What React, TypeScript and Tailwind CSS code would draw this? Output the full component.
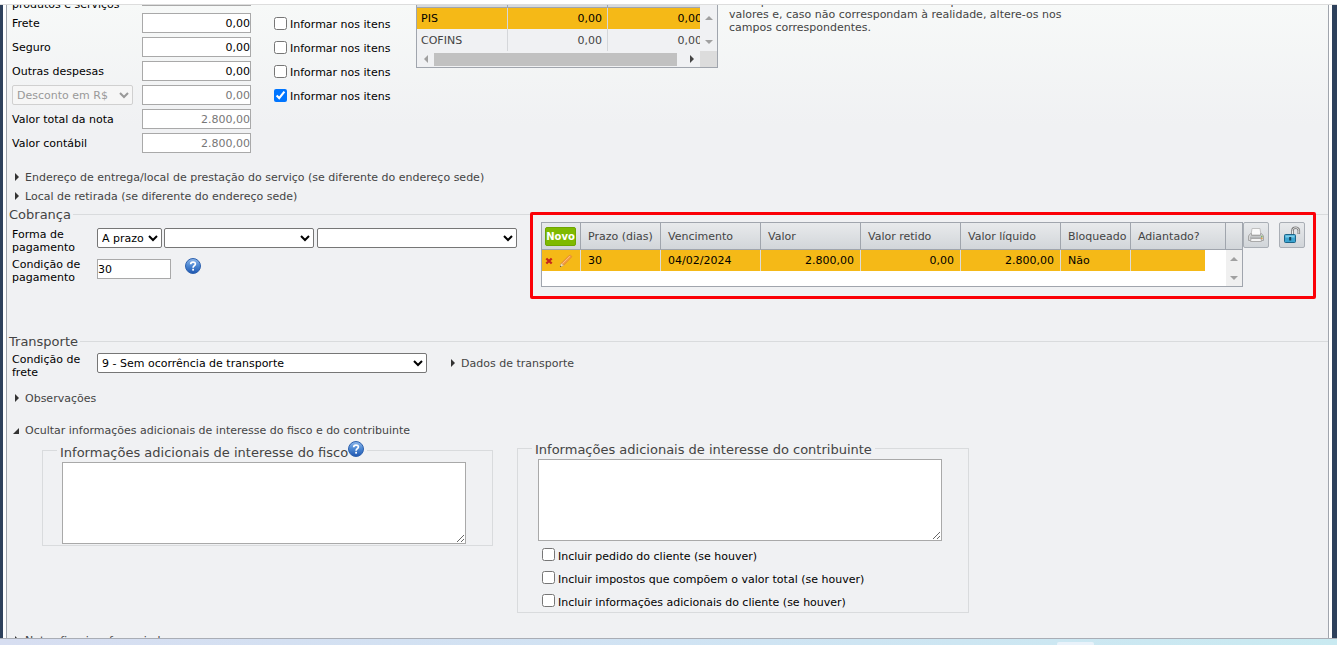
import React, { useState } from 'react';

const inputCls = 'h-5 border border-[#a9a9a9] bg-white outline-none';
const selectCls = 'h-5 rounded-xs border border-[#767676] bg-white text-black';
const legendCls = 'px-[2px] pt-[2px] text-[13px] leading-[14px] text-[#444]';
const iconBtnCls = 'flex size-[26px] items-center justify-center rounded-xs border border-[#a9aeb5] bg-linear-to-b from-[#e8eaec] to-[#d1d5d9]';

const totals = [
    { id: 'frete', label: 'Frete', value: '0,00', check: true },
    { id: 'seguro', label: 'Seguro', value: '0,00', check: true },
    { id: 'outras', label: 'Outras despesas', value: '0,00', check: true },
    { id: 'desconto', label: 'Desconto em R$', value: '0,00', check: true, disabled: true, select: true },
    { id: 'total', label: 'Valor total da nota', value: '2.800,00', disabled: true },
    { id: 'contabil', label: 'Valor contábil', value: '2.800,00', disabled: true },
];

const taxes = [
    { name: 'PIS', base: '0,00', value: '0,00' },
    { name: 'COFINS', base: '0,00', value: '0,00' },
];

const columns = [
    { label: 'Prazo (dias)', value: '30', width: 'w-[80px]' },
    { label: 'Vencimento', value: '04/02/2024', width: 'w-[100px]' },
    { label: 'Valor', value: '2.800,00', width: 'w-[100px]', right: true },
    { label: 'Valor retido', value: '0,00', width: 'w-[100px]', right: true },
    { label: 'Valor líquido', value: '2.800,00', width: 'w-[100px]', right: true },
    { label: 'Bloqueado', value: 'Não', width: 'w-[70px]' },
];

const extras = [
    'Incluir pedido do cliente (se houver)',
    'Incluir impostos que compõem o valor total (se houver)',
    'Incluir informações adicionais do cliente (se houver)',
];

const Arrow = ({ dir, color = '#a0a0a0' }: { dir: 'up' | 'down' | 'left' | 'right'; color?: string }) => {
    const d = { up: 'M0 6L4 2L8 6Z', down: 'M0 2L4 6L8 2Z', left: 'M6 0L2 4L6 8Z', right: 'M2 0L6 4L2 8Z' }[dir];
    return <svg width="8" height="8" viewBox="0 0 8 8" className="shrink-0"><path d={d} fill={color} /></svg>;
};

const HelpIcon = () => (
    <svg width="16" height="16" viewBox="0 0 16 16">
        <defs>
            <linearGradient id="help" x1="0" y1="0" x2="0" y2="1">
                <stop offset="0" stopColor="#8fb8ea" />
                <stop offset="0.5" stopColor="#4a86d2" />
                <stop offset="1" stopColor="#1f56b0" />
            </linearGradient>
        </defs>
        <circle cx="8" cy="8" r="7.5" fill="url(#help)" stroke="#2f62ae" strokeWidth="1" />
        <path d="M5.7 6.2C5.7 3.4 10.4 3.4 10.4 6C10.4 7.7 8.1 7.6 8.1 9.7" fill="none" stroke="#fff" strokeWidth="1.7" />
        <rect x="7.2" y="10.8" width="1.8" height="1.8" fill="#fff" />
    </svg>
);

const PrinterIcon = () => (
    <svg width="16" height="16" viewBox="0 0 16 16">
        <path d="M4 1.5H12L13 8H3Z" fill="#fafafa" stroke="#c0c0c0" />
        <path d="M2.5 6.5H3.5V8.5H12.5V6.5H13.5L15.5 9V13.5H0.5V9Z" fill="#d6d7d8" stroke="#a6a6a6" />
        <path d="M2 9.5H14V12H2Z" fill="#b4b6b8" />
        <path d="M3 11.5H13L13.5 14.5H2.5Z" fill="#f4f4f4" stroke="#aaa" />
        <rect x="13" y="8.7" width="1.6" height="1.6" fill="#7fb36b" />
        <rect x="13" y="10.7" width="1.6" height="1.4" fill="#e0a04a" />
    </svg>
);

const UnlockIcon = () => (
    <svg width="18" height="18" viewBox="0 0 18 18">
        <path d="M9.5 9V4.5C9.5 0.8 15.8 0.8 15.8 4.5V8" fill="none" stroke="#777" strokeWidth="2.6" />
        <path d="M9.5 9V4.5C9.5 0.8 15.8 0.8 15.8 4.5V7.6" fill="none" stroke="#ececec" strokeWidth="1" />
        <rect x="1.5" y="8.5" width="11" height="8" rx="1" fill="#3ba4d0" stroke="#1c6488" />
        <rect x="2.5" y="9.5" width="9" height="2" fill="#80cdea" />
        <rect x="6.2" y="11" width="2" height="3.5" fill="#123f58" />
    </svg>
);

const PencilIcon = () => (
    <svg width="14" height="14" viewBox="0 0 14 14">
        <path d="M2 9.5L10 1.5Q12 0.5 12.8 2.8L4.8 11.2Z" fill="#f39a3c" stroke="#d98435" strokeWidth="0.6" />
        <path d="M3.3 9.8L11.2 2" stroke="#ffc283" strokeWidth="1" />
        <path d="M2 9.5L4.8 11.2L1 13Z" fill="#f6e3c0" stroke="#c9a468" strokeWidth="0.5" />
        <path d="M1 13L1.4 11.8L2.4 12.4Z" fill="#333" />
    </svg>
);

const Toggle = ({ children, open = false }: { children: React.ReactNode; open?: boolean }) => (
    <a href="#" className="flex h-[19px] w-fit items-center gap-[5px] text-[#444]">
        {open ? (
            <svg width="8" height="8" viewBox="0 0 8 8"><path d="M7 1V7H1Z" fill="#333" /></svg>
        ) : (
            <svg width="8" height="10" viewBox="0 0 8 10"><path d="M3 0L7 4L3 8Z" fill="#333" /></svg>
        )}
        <span>{children}</span>
    </a>
);

const Check = ({ id, label, checked = false, onChange }: { id: string; label: string; checked?: boolean; onChange: () => void }) => (
    <div className="flex items-center gap-[3px]">
        <input id={id} type="checkbox" checked={checked} onChange={onChange} className="size-[13px]" />
        <label htmlFor={id} className="pt-[3px]">{label}</label>
    </div>
);

export default function App() {
    const [checks, setChecks] = useState<Record<string, boolean>>({ desconto: true });
    const toggle = (id: string) => setChecks({ ...checks, [id]: !checks[id] });

    return (
        <div className="flex h-screen flex-col bg-white font-['Verdana','DejaVu_Sans',sans-serif] text-[11px] leading-[13px] text-black">
            <div className="h-[5px] shrink-0 border-b border-[#ddd]" />
            <div className="flex min-h-0 grow border-x-[3px] border-l-[#2e415c] border-r-[#2e415c] border-r-[5px] px-[3px]">
                <main className="min-w-0 grow overflow-hidden border-x border-[#a0a5ad] bg-[#f0f1f3] bg-linear-to-b from-[#f7f9f8] to-[#f0f1f3] to-[120px]">
                    <div className="-mt-5 flex h-[170px] items-start">
                        <div className="ml-[5px] w-[404px] shrink-0">
                            <div className="flex h-[26px] items-end">
                                <label htmlFor="produtos" className="w-[130px]">produtos e serviços</label>
                                <input id="produtos" className={`${inputCls} mb-[5px] w-[109px] text-right`} />
                            </div>
                            {totals.map(r => (
                                <div key={r.id} className="flex h-6 items-center">
                                    <div className="w-[130px]">
                                        {r.select ? (
                                            <select disabled aria-label="Tipo de desconto" className="h-5 w-[121px] rounded-xs border border-[#d0d0d0] bg-[#f6f6f6] text-[#999]">
                                                <option>{r.label}</option>
                                            </select>
                                        ) : (
                                            <label htmlFor={r.id} className="block pt-px">{r.label}</label>
                                        )}
                                    </div>
                                    <input id={r.id} aria-label={r.label} defaultValue={r.value} disabled={r.disabled} className={`${inputCls} w-[109px] text-right disabled:text-[#777]`} />
                                    {r.check && (
                                        <div className="ml-[23px]">
                                            <Check id={`itens-${r.id}`} label="Informar nos itens" checked={!!checks[r.id]} onChange={() => toggle(r.id)} />
                                        </div>
                                    )}
                                </div>
                            ))}
                        </div>

                        <div className="w-[302px] shrink-0 border border-[#a0a5ad] bg-[#f0f1f3]">
                            <div className="flex">
                                <div className="w-[283px] overflow-hidden">
                                    <table className="w-[290px] table-fixed border-separate border-spacing-0">
                                        <thead>
                                            <tr className="h-[22px] bg-[#d7dade]">
                                                <th aria-label="Imposto" className="w-[91px] border-r border-b border-[#a0a5ad]" />
                                                <th aria-label="Base" className="w-[100px] border-r border-b border-[#a0a5ad]" />
                                                <th aria-label="Valor do imposto" className="border-b border-[#a0a5ad]" />
                                            </tr>
                                        </thead>
                                        <tbody>
                                            {taxes.map((t, i) => (
                                                <tr key={t.name} className={i === 0 ? 'h-[21px] bg-[#f5b917]' : 'h-[22px] text-[#444]'}>
                                                    <td className="border-r border-[#d5d7da] px-1">{t.name}</td>
                                                    <td className="border-r border-[#d5d7da] px-[5px] text-right">{t.base}</td>
                                                    <td className="px-[5px] text-right">{t.value}</td>
                                                </tr>
                                            ))}
                                        </tbody>
                                    </table>
                                </div>
                                <div className="flex grow flex-col items-center justify-between pt-[28px] pb-[5px]">
                                    <Arrow dir="up" />
                                    <Arrow dir="down" />
                                </div>
                            </div>
                            <div className="flex h-4 items-center">
                                <div className="flex w-[17px] justify-center"><Arrow dir="left" /></div>
                                <div className="h-[13px] w-[243px] bg-[#c1c1c1]" />
                                <div className="flex grow justify-center pl-[6px]"><Arrow dir="right" color="#444" /></div>
                                <div className="h-full w-[17px] bg-[#dcdcdc]" />
                            </div>
                        </div>

                        <p className="mt-[10px] ml-[11px] whitespace-nowrap text-[#444]">
                            Os impostos são calculados conforme o perfil. Confira os<br />
                            valores e, caso não correspondam à realidade, altere-os nos<br />
                            campos correspondentes.
                        </p>
                    </div>

                    <div className="mt-[13px] pl-[5px]">
                        <Toggle>Endereço de entrega/local de prestação do serviço (se diferente do endereço sede)</Toggle>
                        <Toggle>Local de retirada (se diferente do endereço sede)</Toggle>
                    </div>

                    <fieldset className="border-t border-[#d9dbdd]">
                        <legend className={legendCls}>Cobrança</legend>
                        <div className="flex min-h-[111px] items-start pl-[5px]">
                            <div className="w-[529px] shrink-0 pt-[6px]">
                                <div className="flex h-[30px] items-start">
                                    <label htmlFor="forma" className="w-[85px]">Forma de pagamento</label>
                                    <select id="forma" className={`${selectCls} w-[65px]`}><option>A prazo</option></select>
                                    <select aria-label="Meio de pagamento" className={`${selectCls} ml-[2px] w-[150px]`} />
                                    <select aria-label="Conta" className={`${selectCls} ml-[3px] w-[200px]`} />
                                </div>
                                <div className="flex items-start">
                                    <label htmlFor="condicao" className="w-[85px]">Condição de pagamento</label>
                                    <input id="condicao" defaultValue="30" className={`${inputCls} mt-px w-[74px]`} />
                                    <button type="button" aria-label="Ajuda" className="ml-[14px]"><HelpIcon /></button>
                                </div>
                            </div>

                            <div className="relative flex items-start">
                                {/* highlight around the installments */}
                                <div className="pointer-events-none absolute -top-[10px] -right-[11px] -bottom-[12px] -left-[11px] rounded-xs border-3 border-[#fb0007]" />
                                <div className="w-[702px] border border-[#a0a5ad] bg-white">
                                    <table className="w-full table-fixed border-separate border-spacing-0">
                                        <colgroup>
                                            <col className="w-[39px]" />
                                            {columns.map(c => <col key={c.label} className={c.width} />)}
                                            <col className="w-[74px]" />
                                            <col className="w-[21px]" />
                                            <col />
                                        </colgroup>
                                        <thead>
                                            <tr className="h-[27px] bg-linear-to-b from-[#e8eaec] to-[#d1d5d9] text-left text-[#444]">
                                                <th className="border-r border-b border-[#a0a5ad] pl-[3px]">
                                                    <button type="button" className="flex h-[19px] w-[31px] items-center justify-center rounded-xs border border-[#6ea500] bg-[#7fba00] text-[10px] font-bold text-white">Novo</button>
                                                </th>
                                                {columns.map(c => (
                                                    <th key={c.label} className="border-r border-b border-[#a0a5ad] pl-[7px] font-normal whitespace-nowrap">{c.label}</th>
                                                ))}
                                                <th colSpan={2} className="border-r border-b border-[#a0a5ad] pl-[7px] font-normal">Adiantado?</th>
                                                <th aria-label="Rolagem" className="border-b border-[#a0a5ad]" />
                                            </tr>
                                        </thead>
                                        <tbody>
                                            <tr className="h-[21px]">
                                                <td className="border-r border-[#dcdcd8] bg-[#f5b917] pl-[3px]">
                                                    <div className="flex items-center gap-[6px]">
                                                        <button type="button" aria-label="Excluir">
                                                            <svg width="8" height="8" viewBox="0 0 8 8"><path d="M1.3 1.5L6.7 6.5M6.7 1.5L1.3 6.5" stroke="#c4261d" strokeWidth="2.3" /></svg>
                                                        </button>
                                                        <button type="button" aria-label="Editar"><PencilIcon /></button>
                                                    </div>
                                                </td>
                                                {columns.map(c => (
                                                    <td key={c.label} className={`border-r border-[#dcdcd8] bg-[#f5b917] pr-[6px] pl-[7px] ${c.right ? 'text-right' : ''}`}>{c.value}</td>
                                                ))}
                                                <td className="bg-[#f5b917]" />
                                                <td />
                                                <td rowSpan={2} className="bg-[#f0f0f0]">
                                                    <div className="flex flex-col items-center gap-[11px]">
                                                        <Arrow dir="up" />
                                                        <Arrow dir="down" />
                                                    </div>
                                                </td>
                                            </tr>
                                            <tr className="h-[15px]"><td colSpan={9} /></tr>
                                        </tbody>
                                    </table>
                                </div>
                                <button type="button" aria-label="Imprimir" className={iconBtnCls}><PrinterIcon /></button>
                                <button type="button" aria-label="Desbloquear" className={`${iconBtnCls} ml-[10px]`}><UnlockIcon /></button>
                            </div>
                        </div>
                    </fieldset>

                    <fieldset className="border-t border-[#d9dbdd]">
                        <legend className={legendCls}>Transporte</legend>
                        <div className="flex items-start pt-1 pl-[5px]">
                            <label htmlFor="frete-cond" className="w-[85px]">Condição de<br />frete</label>
                            <select id="frete-cond" className={`${selectCls} w-[330px]`}><option>9 - Sem ocorrência de transporte</option></select>
                            <div className="ml-[21px] pt-px"><Toggle>Dados de transporte</Toggle></div>
                        </div>
                    </fieldset>

                    <div className="mt-[10px] pl-[5px]"><Toggle>Observações</Toggle></div>
                    <div className="mt-[13px] pl-[5px]"><Toggle open>Ocultar informações adicionais de interesse do fisco e do contribuinte</Toggle></div>

                    <div className="flex items-start gap-6 pl-[35px]">
                        <fieldset className="w-[451px] border border-[#d9dbdd] pb-px pl-[14px]">
                            <legend className="px-[3px] text-[13px] text-[#444]">
                                <span className="flex h-5 items-start">
                                    <label htmlFor="fisco" className="pt-[6px]">Informações adicionais de interesse do fisco</label>
                                    <button type="button" aria-label="Ajuda" className="pt-px"><HelpIcon /></button>
                                </span>
                            </legend>
                            <textarea id="fisco" className="mt-[2px] ml-[5px] block h-[82px] w-[404px] border border-[#a9a9a9] bg-white" />
                        </fieldset>
                        <fieldset className="w-[452px] border border-[#d9dbdd] pl-[14px]">
                            <legend className="px-[3px] pt-[3px] text-[13px] leading-[14px] text-[#444]"><label htmlFor="contribuinte">Informações adicionais de interesse do contribuinte</label></legend>
                            <textarea id="contribuinte" className="mt-[2px] ml-[6px] block h-[82px] w-[404px] border border-[#a9a9a9] bg-white" />
                            <div className="pt-[2px] pl-[10px]">
                                {extras.map(e => (
                                    <div key={e} className="flex h-[23px] items-center">
                                        <Check id={e} label={e} checked={!!checks[e]} onChange={() => toggle(e)} />
                                    </div>
                                ))}
                            </div>
                        </fieldset>
                    </div>

                    <div className="mt-[18px] pl-[5px]"><Toggle>Notas fiscais referenciadas</Toggle></div>
                </main>
            </div>
            <footer className="flex h-[7px] shrink-0 items-end justify-end border-t border-[#a9adb5] bg-linear-to-r from-[#d7def1] via-[#d0e3f3] to-[#c9eaf1] pr-[243px]">
                <div className="h-[3px] w-[37px] rounded-t-xs bg-[#e9f2fa]" />
            </footer>
        </div>
    );
}
